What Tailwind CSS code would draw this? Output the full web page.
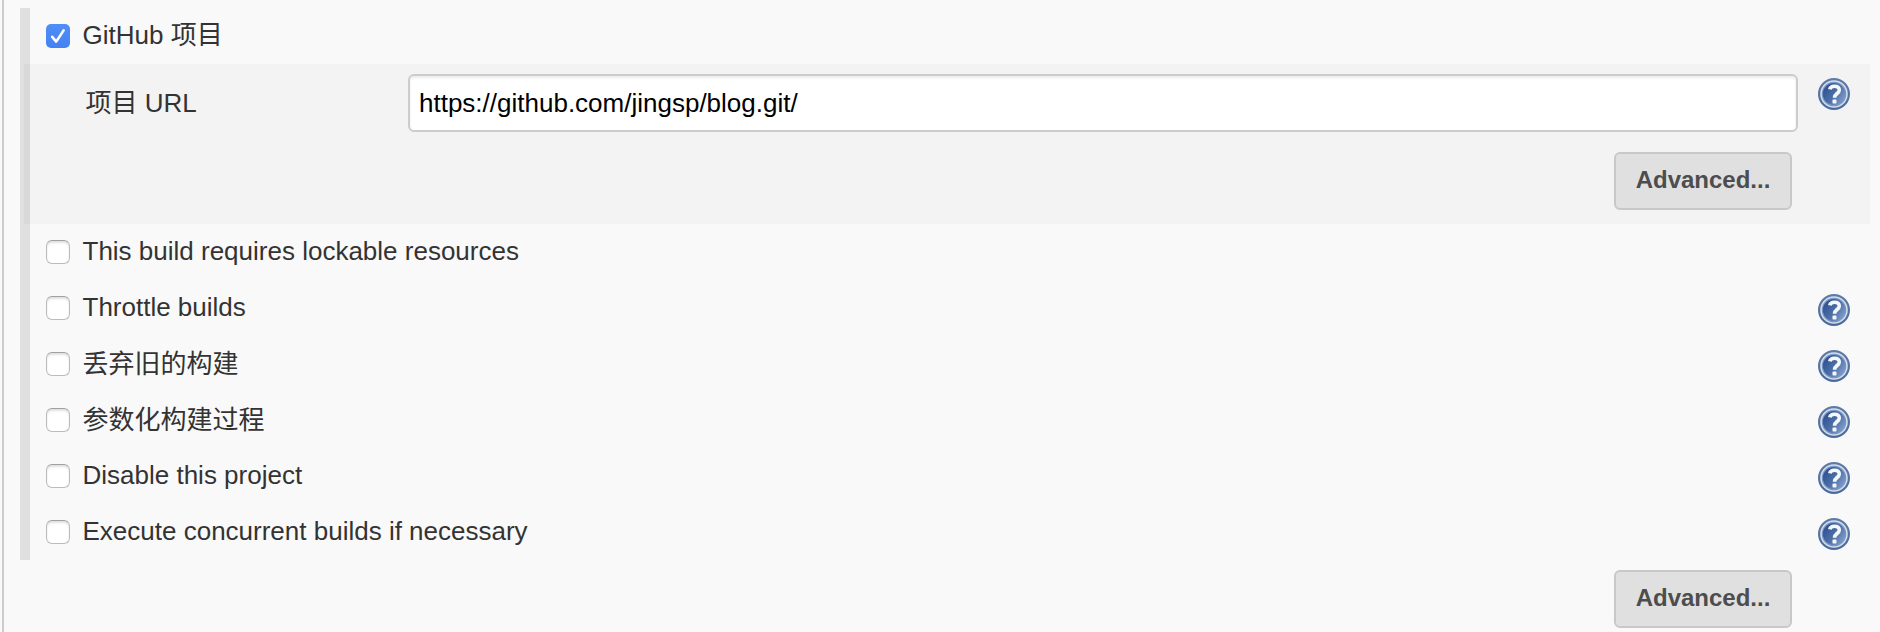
<!DOCTYPE html>
<html lang="zh">
<head>
<meta charset="utf-8">
<title>GitHub 项目</title>
<script src="https://cdn.jsdelivr.net/npm/@tailwindcss/browser@4"></script>
</head>
<body class="h-[632px] overflow-hidden bg-[#f9f9f9] pl-0.5 font-['Liberation_Sans','Noto_Sans_CJK_SC',sans-serif] text-[26px] leading-[30px] text-[#333]">
<svg class="absolute size-0">
  <defs>
    <linearGradient id="disc" x1="0" y1="0.2" x2="1" y2="0.9"><stop offset="0" stop-color="#2a4f8e"/><stop offset=".5" stop-color="#4d6fa8"/><stop offset="1" stop-color="#8ba6d0"/></linearGradient>
    <linearGradient id="rim" x1="0" y1="0" x2="0" y2="1"><stop offset="0" stop-color="#5f7ba8"/><stop offset="1" stop-color="#4b6a9c"/></linearGradient>
    <symbol id="help" viewBox="0 0 32 32">
      <circle cx="16" cy="16" r="14.9" fill="#d3deed" stroke="url(#rim)" stroke-width="2.2"/>
      <circle cx="16" cy="16" r="11.7" fill="url(#disc)" stroke="#7d98c3" stroke-width="1.2"/>
      <path d="M11.8 11.4C12.3 8.9 14.2 8.2 16.4 8.2c3 0 4.9 1.4 4.9 3.8 0 3.6-4.8 3.5-4.8 7.8" fill="none" stroke="#f4f7fc" stroke-width="3.6"/>
      <rect x="14.5" y="21.6" width="4" height="4" rx=".8" fill="#f4f7fc"/>
    </symbol>
  </defs>
</svg>
<div class="h-[632px] border-l-2 border-[#ccc] pt-2 pl-4">
  <div class="border-l-[10px] border-[#e0e0e0]">
    <label class="flex h-14 items-start pt-4 pl-4">
      <span class="flex size-6 shrink-0 items-center justify-center rounded-[5px] bg-gradient-to-b from-[#4f8ef7] to-[#4482f3]">
        <svg class="size-6" viewBox="0 0 24 24" fill="none" stroke="#fff" stroke-width="2.6" stroke-linecap="round" stroke-linejoin="round"><path d="M6.2 12.8 10.2 17.6 17.6 6.4"/></svg>
      </span>
      <span class="-mt-1 ml-[12.5px]">GitHub 项目</span>
    </label>
    <div class="-ml-1.5 flex h-40 w-[1846px] border-l-[6px] border-[#d9d9d9] bg-[#f3f3f3] pt-2.5">
      <div class="w-[378px] pt-3.5 pl-[55.5px]">项目 URL</div>
      <div class="flex w-[1390px] flex-col">
        <div class="h-[58px] rounded-md border-2 border-[#ccc] bg-white pt-3 pl-[9px] text-black shadow-[inset_0_2px_3px_rgba(0,0,0,0.08)]">https://github.com/jingsp/blog.git/</div>
        <button class="mt-5 mr-1.5 h-[58px] w-[178px] self-end rounded-md border-2 border-[#c8c8c8] bg-[#e0e0e0] pb-0.5 text-[24px] font-bold text-[#4d4d4d]">Advanced...</button>
      </div>
      <svg class="mt-1 ml-5 size-8"><use href="#help"/></svg>
    </div>
    <div class="flex h-14 w-[1820px] items-start pt-4 pl-4">
      <span class="size-6 shrink-0 rounded-[6px] border-[1.5px] border-[#bbb] border-t-[#a0a0a0] bg-white shadow-[inset_0_2px_2px_rgba(0,0,0,0.12)]"></span>
      <span class="-mt-1 ml-[12.5px]">This build requires lockable resources</span>
    </div>
    <div class="flex h-14 w-[1820px] items-start pt-4 pl-4">
      <span class="size-6 shrink-0 rounded-[6px] border-[1.5px] border-[#bbb] border-t-[#a0a0a0] bg-white shadow-[inset_0_2px_2px_rgba(0,0,0,0.12)]"></span>
      <span class="-mt-1 ml-[12.5px]">Throttle builds</span>
      <svg class="-mt-0.5 ml-auto size-8"><use href="#help"/></svg>
    </div>
    <div class="flex h-14 w-[1820px] items-start pt-4 pl-4">
      <span class="size-6 shrink-0 rounded-[6px] border-[1.5px] border-[#bbb] border-t-[#a0a0a0] bg-white shadow-[inset_0_2px_2px_rgba(0,0,0,0.12)]"></span>
      <span class="-mt-[3px] ml-[12.5px]">丢弃旧的构建</span>
      <svg class="-mt-0.5 ml-auto size-8"><use href="#help"/></svg>
    </div>
    <div class="flex h-14 w-[1820px] items-start pt-4 pl-4">
      <span class="size-6 shrink-0 rounded-[6px] border-[1.5px] border-[#bbb] border-t-[#a0a0a0] bg-white shadow-[inset_0_2px_2px_rgba(0,0,0,0.12)]"></span>
      <span class="-mt-[3px] ml-[12.5px]">参数化构建过程</span>
      <svg class="-mt-0.5 ml-auto size-8"><use href="#help"/></svg>
    </div>
    <div class="flex h-14 w-[1820px] items-start pt-4 pl-4">
      <span class="size-6 shrink-0 rounded-[6px] border-[1.5px] border-[#bbb] border-t-[#a0a0a0] bg-white shadow-[inset_0_2px_2px_rgba(0,0,0,0.12)]"></span>
      <span class="-mt-1 ml-[12.5px]">Disable this project</span>
      <svg class="-mt-0.5 ml-auto size-8"><use href="#help"/></svg>
    </div>
    <div class="flex h-14 w-[1820px] items-start pt-4 pl-4">
      <span class="size-6 shrink-0 rounded-[6px] border-[1.5px] border-[#bbb] border-t-[#a0a0a0] bg-white shadow-[inset_0_2px_2px_rgba(0,0,0,0.12)]"></span>
      <span class="-mt-1 ml-[12.5px]">Execute concurrent builds if necessary</span>
      <svg class="-mt-0.5 ml-auto size-8"><use href="#help"/></svg>
    </div>
  </div>
  <div class="flex w-[1772px] justify-end pt-2.5">
    <button class="h-[58px] w-[178px] rounded-md border-2 border-[#c8c8c8] bg-[#e0e0e0] pb-0.5 text-[24px] font-bold text-[#4d4d4d]">Advanced...</button>
  </div>
</div>
</body>
</html>
